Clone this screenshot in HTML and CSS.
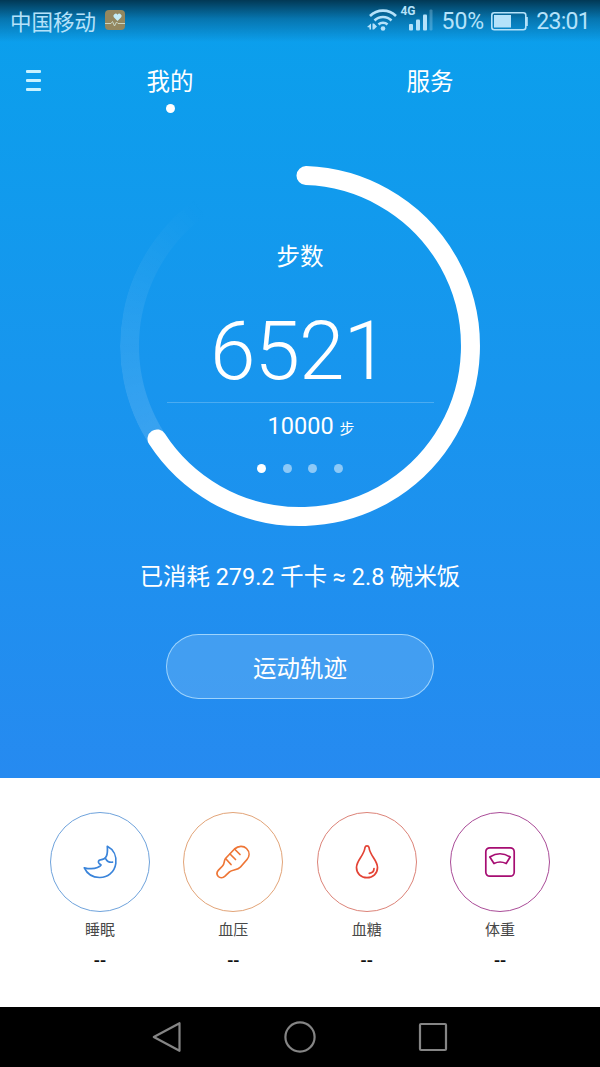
FILE: index.html
```html
<!DOCTYPE html>
<html lang="zh-CN">

<head>
    <meta charset="UTF-8">
    <meta name="viewport" content="width=device-width, initial-scale=1.0">
    <title>运动健康</title>
    <link rel="stylesheet" href="styles.css">
</head>

<body>
    <div class="hero">
        <!-- Status Bar -->
        <div class="status-bar">
            <span class="carrier">中国移动</span>
            <svg class="app-icon" width="20" height="20" viewBox="0 0 20 20">
                <rect width="20" height="20" rx="4" fill="#93875f"/>
                <path d="M12.500 11L8.800 7.300a2.200 2.200 0 0 1 3.700-2.600a2.200 2.200 0 0 1 3.700 2.600z" fill="#c4edf7"/>
                <path d="M0 13.500h6l1.500-2 2 4.500 2-4 1.500 1.500h7" fill="none" stroke="#c9d6c4" stroke-width="1"/>
            </svg>
            <div class="status-right">
                <svg class="wifi" width="32" height="24" viewBox="0 0 32 24" fill="none" stroke="#b5e2fa" stroke-width="2.600">
                    <path d="M3 8a18.500 18.500 0 0 1 26 0"/>
                    <path d="M7.500 12.500a12 12 0 0 1 17 0"/>
                    <path d="M11.500 16.500a6.500 6.500 0 0 1 9 0"/>
                    <circle cx="16" cy="20.500" r="2.300" fill="#b5e2fa" stroke="none"/>
                    <path d="M0 19l4-3.500v6h-1.500v-2zM5.500 15.500h1.500l3 3-3 3h-1.500z" fill="#b5e2fa" stroke="none"/>
                </svg>
                <div class="signal">
                    <span class="network">4G</span>
                    <svg width="24" height="22" viewBox="0 0 24 22" fill="#b5e2fa">
                        <rect x="0" y="15" width="4" height="6.500" rx="1"/>
                        <rect x="7" y="10.500" width="4" height="11" rx="1"/>
                        <rect x="14" y="5.500" width="4" height="16" rx="1"/>
                        <rect x="20.500" y="0.500" width="3" height="21" rx="1" opacity=".3"/>
                    </svg>
                </div>
                <span class="percent">50%</span>
                <svg class="battery" width="37" height="19" viewBox="0 0 37 19">
                    <rect x="0.800" y="0.800" width="34" height="17" rx="2.500" fill="none" stroke="#b5e2fa" stroke-width="1.600"/>
                    <rect x="3" y="3" width="17" height="12.500" fill="#b5e2fa"/>
                    <path d="M35 5h1.800v9h-1.800z" fill="#b5e2fa"/>
                </svg>
                <span class="clock">23:01</span>
            </div>
        </div>

        <!-- Top Tabs -->
        <div class="tabs">
            <div class="menu">
                <span></span>
                <span></span>
                <span></span>
            </div>
            <div class="tab active">我的</div>
            <div class="tab">服务</div>
        </div>

        <!-- Step Ring -->
        <div class="ring">
            <div class="ring-track"></div>
            <svg class="ring-progress" width="360" height="360" viewBox="0 0 360 360">
                <path d="M186 9.600A170.500 170.500 0 1 1 37 272.900" fill="none" stroke="#fff" stroke-width="19" stroke-linecap="round"/>
            </svg>
            <div class="ring-content">
                <div class="ring-title">步数</div>
                <div class="steps">6521</div>
                <div class="goal">10000 <small>步</small></div>
                <div class="dots">
                    <span class="current"></span>
                    <span></span>
                    <span></span>
                    <span></span>
                </div>
            </div>
        </div>

        <div class="summary">已消耗 279.2 千卡 ≈ 2.8 碗米饭</div>
        <button type="button" class="track-btn">运动轨迹</button>
    </div>

    <!-- Health Cards -->
    <div class="cards">
        <div class="card sleep">
            <div class="card-icon">
                <svg width="36" height="36" viewBox="0 0 36 36">
                    <path d="M25.300 2.300C31.500 5.500 34.800 12 33.800 19.500C32.500 28.500 25.500 33.700 17.500 33.500C10.500 33.300 5 29.500 2.300 23.800C6.500 24.800 12 25 15.500 23.500C17.500 22.700 18.500 22 19 21L17 19.300C15.800 17.800 16.500 16 18.500 15.800C24.500 15.500 26 11 25.300 2.300Z"/>
                    <path d="M23.800 14.800C25.200 17.800 27.500 18.500 30.500 18.200"/>
                </svg>
            </div>
            <div class="card-name">睡眠</div>
            <div class="card-value">--</div>
        </div>
        <div class="card pressure">
            <div class="card-icon">
                <svg width="36" height="36" viewBox="0 0 36 36">
                    <path d="M19.500 5C23.500 1.500 28.500 1.500 31.500 4.500C35 8 34.500 12.500 32 15.500L25.500 23C22.500 26.500 17.500 25.500 14.500 27.800L10 32.200C8 34 5 34.300 3.300 32.500C1.500 30.500 1.800 28 3.500 26.200L7.500 22C10 19.500 8.500 17 10.500 14.500Z"/>
                    <path d="M11 15L16 20.500M15 10L20.500 15.500M20 5.500L25 10.500"/>
                </svg>
            </div>
            <div class="card-name">血压</div>
            <div class="card-value">--</div>
        </div>
        <div class="card sugar">
            <div class="card-icon">
                <svg width="36" height="36" viewBox="0 0 36 36">
                    <path d="M16 3.500C16.500 1.300 19.500 1.300 20 3.500C21 12 28.500 16 28.500 23.500C28.500 29.500 24 33.700 18 33.700S7.500 29.500 7.500 23.500C7.500 16 15 12 16 3.500Z"/>
                    <path d="M25 24.500C25 27 23 29 20.300 29.300"/>
                </svg>
            </div>
            <div class="card-name">血糖</div>
            <div class="card-value">--</div>
        </div>
        <div class="card weight">
            <div class="card-icon">
                <svg width="36" height="36" viewBox="0 0 36 36">
                    <rect x="3.800" y="3.800" width="28.400" height="28.400" rx="4"/>
                    <path d="M7.800 13Q18 6.500 28.200 13L24.200 19.500Q18 16.500 12 19.500Z"/>
                </svg>
            </div>
            <div class="card-name">体重</div>
            <div class="card-value">--</div>
        </div>
    </div>

    <!-- Navigation Bar -->
    <div class="nav-bar">
        <svg width="32" height="32" viewBox="0 0 32 32"><path d="M28.500 2.200V29.800L2.800 16Z"/></svg>
        <svg width="32" height="32" viewBox="0 0 32 32"><circle cx="16" cy="16" r="14.600"/></svg>
        <svg width="32" height="32" viewBox="0 0 32 32"><rect x="3" y="3" width="26" height="26" rx="1"/></svg>
    </div>
</body>

</html>
```
FILE: styles.css
```css
/* General Styling */
body {
    margin: 0;
    width: 600px;
    height: 1067px;
    overflow: hidden;
    font-family: Roboto, "Noto Sans CJK SC", sans-serif;
    background-color: #fff;
}

.hero {
    height: 778px;
    color: #fff;
    background: linear-gradient(#0aa0ec, #268af0);
    display: flex;
    flex-direction: column;
    align-items: center;
}

/* Status Bar */
.status-bar {
    width: 100%;
    height: 42px;
    padding: 0 10px;
    box-sizing: border-box;
    display: flex;
    align-items: center;
    color: #b5e2fa;
    font-size: 23px;
    background: linear-gradient(rgba(0, 38, 58, 0.85), rgba(0, 55, 85, 0.4) 45%, rgba(0, 60, 90, 0));
}

.carrier {
    margin-bottom: 2px;
    font-size: 21.5px;
}

.app-icon {
    margin-left: 9px;
    margin-bottom: 2px;
}

.status-right {
    margin-left: auto;
    display: flex;
    align-items: center;
}

.wifi {
    margin-right: -2px;
}

.wifi,
.signal {
    margin-bottom: 2px;
}

.signal {
    display: flex;
    align-items: center;
}

.network {
    font-size: 12px;
    font-weight: bold;
    align-self: flex-start;
    line-height: 4px;
    margin: 0 -7px 0 3px;
}

.percent {
    margin-left: 9px;
}

.battery {
    margin: 0 8px 0 7px;
}

.clock {
    letter-spacing: -0.7px;
}

/* Top Tabs */
.tabs {
    width: 100%;
    height: 78px;
    display: flex;
    position: relative;
}

.menu {
    position: absolute;
    left: 26px;
    top: 28px;
    display: flex;
    flex-direction: column;
    gap: 6px;
}

.menu span {
    width: 15px;
    height: 3px;
    border-radius: 1px;
    background-color: #c8f2ff;
}

.tab {
    width: 260px;
    padding-top: 23px;
    text-align: center;
    font-size: 23.5px;
    line-height: 34px;
}

.tab:nth-child(2) {
    margin-left: 40px;
}

.tab.active::after {
    content: "";
    display: block;
    width: 9px;
    height: 9px;
    margin: 5px auto 0;
    border-radius: 50%;
    background-color: #fff;
}

/* Step Ring */
.ring {
    position: relative;
    width: 360px;
    height: 360px;
    margin-top: 46px;
}

.ring-track,
.ring-progress {
    position: absolute;
    left: 0;
    top: 0;
}

.ring-track {
    width: 360px;
    height: 360px;
    border-radius: 50%;
    background: conic-gradient(transparent 236deg, rgba(255, 255, 255, 0.14) 237deg, rgba(255, 255, 255, 0.08) 280deg, transparent 325deg);
    -webkit-mask: radial-gradient(circle, transparent 160.5px, #000 161.5px);
    mask: radial-gradient(circle, transparent 160.5px, #000 161.5px);
}

.ring-content {
    position: relative;
    display: flex;
    flex-direction: column;
    align-items: center;
    padding-top: 74px;
}

.ring-title {
    font-size: 23.5px;
    line-height: 34px;
}

.steps {
    width: 267px;
    height: 128px;
    line-height: 154px;
    font-size: 82px;
    font-weight: 300;
    letter-spacing: -1px;
    text-align: center;
    text-indent: -2px;
    border-bottom: 1px solid rgba(255, 255, 255, 0.22);
}

.goal {
    margin-top: 6px;
    padding-left: 22px;
    font-size: 23.5px;
    line-height: 34px;
}

.goal small {
    font-size: 15px;
}

.dots {
    display: flex;
    gap: 16.5px;
    margin-top: 18px;
}

.dots span {
    width: 9px;
    height: 9px;
    border-radius: 50%;
    background-color: rgba(255, 255, 255, 0.5);
}

.dots .current {
    background-color: #fff;
}

.summary {
    margin-top: 33px;
    font-size: 23.4px;
    line-height: 36px;
    white-space: nowrap;
}

.track-btn {
    width: 268px;
    height: 65px;
    margin-top: 39px;
    padding: 0;
    border: 1px solid rgba(190, 230, 255, 0.75);
    border-radius: 33px;
    background-color: rgba(255, 255, 255, 0.15);
    color: #fff;
    font-family: inherit;
    font-size: 23.5px;
    cursor: pointer;
}

/* Health Cards */
.cards {
    height: 229px;
    padding: 34px 33.3px 0;
    box-sizing: border-box;
    display: grid;
    grid-template-columns: repeat(4, 1fr);
    text-align: center;
}

.card-icon {
    width: 98px;
    height: 98px;
    margin: 0 auto;
    border: 1px solid;
    border-radius: 50%;
    display: flex;
    align-items: center;
    justify-content: center;
}

.card-icon svg {
    fill: none;
    stroke-width: 1.7;
    stroke-linecap: round;
    stroke-linejoin: round;
}

.sleep .card-icon { border-color: #6fa3dc; }
.sleep svg { stroke: #3a84da; }

.pressure .card-icon { border-color: #e2a478; }
.pressure svg { stroke: #ee7636; }

.sugar .card-icon { border-color: #dc8378; }
.sugar svg { stroke: #e34335; }

.weight .card-icon { border-color: #aa4c98; }
.weight svg { stroke: #a60d72; }

.card-name {
    margin-top: 5px;
    font-size: 15px;
    line-height: 26px;
    color: #484848;
}

.card-value {
    margin-top: 6px;
    font-size: 18px;
    font-weight: 500;
    line-height: 24px;
    color: #111;
}

/* Navigation Bar */
.nav-bar {
    height: 60px;
    background-color: #000;
    display: flex;
    align-items: center;
    justify-content: center;
    gap: 101px;
}

.nav-bar svg {
    fill: none;
    stroke: #858585;
    stroke-width: 2.2;
    stroke-linejoin: round;
}
```
